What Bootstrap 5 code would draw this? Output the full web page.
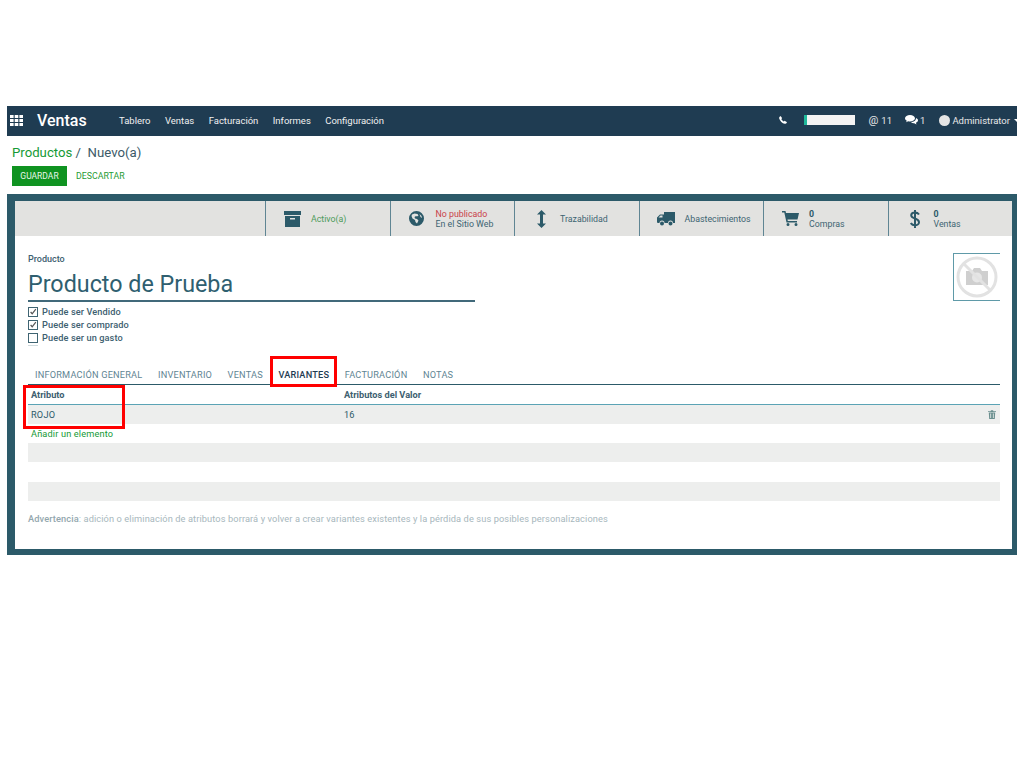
<!DOCTYPE html>
<html lang="es"><head><meta charset="utf-8"><title>Ventas</title>
<link href="https://cdn.jsdelivr.net/npm/bootstrap@5.3.0/dist/css/bootstrap.min.css" rel="stylesheet">
<style>
html,body{height:767px;overflow:hidden;background:#fff}
body{font-family:Roboto,"Liberation Sans",sans-serif;color:#2c5a69;font-size:9.5px;line-height:13px}
.stage{position:relative;width:1023px;height:767px;padding:106px 6px 0 7px;overflow:hidden}
.topbar{height:30px;background:#1f3c52;color:#f0f0f0;font-size:9.5px;white-space:nowrap;padding-bottom:2px}
.gridico{margin-left:3px}
.appname{font-size:16px;font-weight:500;margin-left:14px;width:82px;color:#fff}
.menu-links{gap:14.4px}
.sys{color:#e8e8e8}
.phone{margin-right:17px}
.progressbox{width:51px;height:10px;background:#f3f3f3;border-left:3px solid #1fb89a;margin-right:13px}
.avatar{width:11px;height:11px;border-radius:50%;background:#e4e4e4;margin-right:2px}
.caretd{border-top:3px solid #fff;border-left:3px solid transparent;border-right:3px solid transparent;margin-left:4px;margin-right:-3px}
.at{font-size:11px}
.cnt1{margin-right:13px;font-size:9.5px;margin-left:3px}
.cnt2{margin-left:2px;margin-right:14px;font-size:9.5px}
.crumbs{height:58px;padding:9px 5px 0}
.crumb-t{font-size:13.2px;line-height:16px;color:#3c5a68}
.crumb-t span{color:#159a35}
.crumb-btns{margin-top:5px}
.save{background:#0f9321;color:#e9f6ea;font-size:8.5px;height:20px;width:55px;line-height:20px;text-align:center}
.discard{color:#1f9c35;font-size:8.8px;line-height:20px;margin-left:9px}
.panel{height:361px;background:#2c5a69;padding:7px 5px 6px 8px}
.sheet{height:348px;background:#fff;position:relative}
.stats{height:35px;background:#e2e2e0;padding-left:250px}
.stat{width:124.5px;border-left:1px solid #5f8593;font-size:8.8px;line-height:10px;display:flex;align-items:center;color:#3d6472;flex:none}
.stat.last{width:124px}
.stat svg{flex:none;fill:#2c5a69}
.ico{width:52px;margin-right:-7px;display:flex;justify-content:center;flex:none}
.red{color:#c9414a}.grn{color:#4c9a5a}
.stat b{font-weight:700;color:#2c5a69}
.formarea{padding:17px 12px 0 13px;position:relative}
.lbl{font-weight:500;font-size:9px;line-height:12px;color:#3d6070}
.prodname{font-size:23.3px;line-height:28px;height:33px;margin-top:4px;padding-top:1px;width:447px;border-bottom:2px solid #41697a;color:#2f5f70}
.checks{margin-top:3px}
.chk{display:flex;align-items:center;height:13px;font-weight:500;font-size:9.2px;letter-spacing:.1px;color:#3d6070}
.box{width:10px;height:10px;border:1px solid #3f6472;margin-right:4px;flex:none;display:block}
.stub{width:10px;height:1px;background:#cfdadd;margin-top:1px}
.tabs{margin-top:12px;height:27px;border-bottom:1px solid #2c5a69;padding:7px 0 0 7px;gap:15.5px;font-size:9.2px;letter-spacing:.2px;color:#5f8593;line-height:19px;white-space:nowrap}
.tabs .on{color:#1f3c52;font-weight:500}
.thead-row{height:20px;border-bottom:1px solid #5ba3b5;font-weight:700;font-size:9.2px;line-height:19px;color:#3d6070;padding-left:3px}
.c1{width:313px;flex:none}
.trow{height:19px;background:#edeeed;line-height:20px;padding:0 4px 0 3px;font-size:9.2px;letter-spacing:.2px}
.addl{height:19px;line-height:20px;padding-left:3px;color:#159a35;font-size:9.2px;letter-spacing:.15px}
.blank{height:19px;background:#edeeed}
.gapw{height:20px}
.warn{margin-top:11px;font-size:9.25px;line-height:13px;color:#a7b7bd;letter-spacing:.1px}
.warn b{font-weight:500;color:#93a7ae}
.thumb{position:absolute;left:938px;top:52px;width:47px;height:48px;border:1px solid #5f9aa8;border-right:0;display:flex;align-items:center;justify-content:center}
.mk{position:absolute;border:3px solid #f00}
.mk1{left:270px;top:356px;width:67px;height:31px}
.mk2{left:23px;top:385px;width:102px;height:44px}
</style></head>
<body>
<div class="stage">
  <div class="topbar d-flex align-items-center">
    <svg class="gridico" width="13" height="11" viewBox="0 0 13 11" fill="#fff" aria-hidden="true"><path d="M0 0h3.600v3.100H0zM4.700 0h3.600v3.100H4.700zM9.400 0h3.600v3.100H9.400zM0 4h3.600v3.100H0zM4.700 4h3.600v3.100H4.700zM9.400 4h3.600v3.100H9.400zM0 8h3.600v3.100H0zM4.700 8h3.600v3.100H4.700zM9.400 8h3.600v3.100H9.400z"/></svg>
    <div class="appname">Ventas</div>
    <div class="d-flex menu-links"><span>Tablero</span><span>Ventas</span><span>Facturación</span><span>Informes</span><span>Configuración</span></div>
    <div class="sys d-flex align-items-center ms-auto">
      <svg class="phone" width="8" height="8" viewBox="0 0 8 8" fill="#fff" aria-hidden="true"><path d="M1.800.2 3 1.900c.1.300 0 .5-.2.7l-.5.5c.4.900 1.300 1.900 2.500 2.500l.6-.6c.2-.2.400-.2.600-.1l1.700 1.200c.2.200.2.400.1.600-.4.800-1.200 1.200-2 1C3.300 7.300.9 5 .2 2.400 0 1.500.4.700 1.200.2c.2-.1.400-.1.600 0z"/></svg>
      <div class="progressbox"></div>
      <span class="at">@</span><span class="cnt1">11</span>
      <svg width="13" height="10" viewBox="0 0 13 10" fill="#fff" aria-hidden="true"><path d="M5 0C2.300 0 0 1.400 0 3.200c0 1 .7 1.900 1.800 2.500L1.100 7.300l2.100-1c.6.100 1.200.2 1.800.2 2.700 0 5-1.500 5-3.300S7.700 0 5 0z"/><path d="M11 3.200c0 2.200-2.400 3.800-5 4 .8.800 2 1.100 3.200 1l2.300 1.300-.6-1.800C12.200 7.200 13 6.400 13 5.300c0-1-.8-1.800-2-2.300z"/></svg>
      <span class="cnt2">1</span>
      <span class="avatar"></span><span>Administrator</span><span class="caretd"></span>
    </div>
  </div>
  <div class="crumbs">
    <div class="crumb-t"><span>Productos</span> /&nbsp; Nuevo(a)</div>
    <div class="crumb-btns d-flex"><div class="save">GUARDAR</div><div class="discard">DESCARTAR</div></div>
  </div>
  <div class="panel">
    <div class="sheet">
      <div class="stats d-flex">
        <div class="stat"><span class="ico"><svg width="17" height="16" viewBox="0 0 17 16" aria-hidden="true"><path d="M0 0h17v4H0zM1 5h15v11H1zM6 7v1.500h5V7z" fill-rule="evenodd"/></svg></span><span class="grn">Activo(a)</span></div>
        <div class="stat"><span class="ico"><svg width="15" height="15" viewBox="0 0 15 15" aria-hidden="true"><path fill-rule="evenodd" d="M7.500 0a7.500 7.500 0 1 0 0 15 7.500 7.500 0 0 0 0-15zM3 3.500l2.500-1 3 .5 1 1.500L8 5.500l-1-.5-1.500 1L6 7.500l2 .5 1.500 1.500L8 12.500 6.500 11 6 9 3.500 7.500 2.500 5zM10.500 3l2 2 .5 2-1.500-1z"/></svg></span><span><span class="red">No publicado</span><br>En el Sitio Web</span></div>
        <div class="stat"><span class="ico"><svg width="9" height="18" viewBox="0 0 9 18" aria-hidden="true"><path d="M4.500 0 9 4.500H6V13.500H9L4.500 18 0 13.500H3V4.500H0z"/></svg></span><span>Trazabilidad</span></div>
        <div class="stat"><span class="ico"><svg width="18" height="14" viewBox="0 0 18 14" aria-hidden="true"><path fill-rule="evenodd" d="M7 0h11v11h-2a2.500 2.500 0 0 0-5 0H7.500a2.500 2.500 0 0 0-5 0H1a1 1 0 0 1-1-1V5.500L3 2.500H7zM1.500 5.500H5.500V3.500H3.500zM5 9.500a2 2 0 1 1 0 4 2 2 0 0 1 0-4zM13.500 9.500a2 2 0 1 1 0 4 2 2 0 0 1 0-4z"/></svg></span><span>Abastecimientos</span></div>
        <div class="stat"><span class="ico"><svg width="17" height="15" viewBox="0 0 17 15" aria-hidden="true"><path d="M0 0h3.500l.5 2h13l-1.500 6.500H5.500l.3 1.500H15v1.500H4.500L2.300 1.500H0zM6 12a1.500 1.500 0 1 1 0 3 1.500 1.500 0 0 1 0-3zM14 12a1.500 1.500 0 1 1 0 3 1.500 1.500 0 0 1 0-3z"/></svg></span><span><b>0</b><br>Compras</span></div>
        <div class="stat last"><span class="ico"><svg width="10" height="18" viewBox="0 0 10 18" aria-hidden="true"><path fill="none" stroke="#2c5a69" stroke-width="2" d="M9 4.500C8 3 6.500 2.500 5 2.500 3 2.500 1.200 3.500 1.200 5.300c0 4 7.800 2.500 7.800 7 0 1.900-2 3-4 3-1.700 0-3.300-.7-4.200-2.200M5 0v18"/></svg></span><span><b>0</b><br>Ventas</span></div>
      </div>
      <div class="formarea">
        <div class="lbl">Producto</div>
        <div class="prodname">Producto de Prueba</div>
        <div class="checks">
          <div class="chk"><svg class="box" viewBox="0 0 10 10" aria-hidden="true"><path d="M2 5l2 2.200L8.500 1.500" fill="none" stroke="#555" stroke-width="1.500"/></svg>Puede ser Vendido</div>
          <div class="chk"><svg class="box" viewBox="0 0 10 10" aria-hidden="true"><path d="M2 5l2 2.200L8.500 1.500" fill="none" stroke="#555" stroke-width="1.500"/></svg>Puede ser comprado</div>
          <div class="chk"><span class="box"></span>Puede ser un gasto</div>
          <div class="stub"></div>
        </div>
        <div class="tabs d-flex"><span>INFORMACIÓN GENERAL</span><span>INVENTARIO</span><span>VENTAS</span><span class="on">VARIANTES</span><span>FACTURACIÓN</span><span>NOTAS</span></div>
        <div class="thead-row d-flex"><div class="c1">Atributo</div><div>Atributos del Valor</div></div>
        <div class="trow d-flex align-items-center"><div class="c1">ROJO</div><div>16</div>
          <svg class="ms-auto" width="8" height="9" viewBox="0 0 8 9" fill="#6b8f8f" aria-hidden="true"><path fill-rule="evenodd" d="M0 1.200h2.500L3 .2h2l.5 1H8V2H0zM.8 2.600h6.400L6.800 9H1.200zM2.300 3.500v4.500h.8V3.500zM4.900 3.500v4.500h.8V3.500z"/></svg>
        </div>
        <div class="addl">Añadir un elemento</div>
        <div class="blank"></div><div class="gapw"></div><div class="blank"></div>
        <div class="warn"><b>Advertencia</b>: adición o eliminación de atributos borrará y volver a crear variantes existentes y la pérdida de sus posibles personalizaciones</div>
      </div>
      <div class="thumb"><svg width="42" height="42" viewBox="0 0 42 42" aria-hidden="true"><path fill="#cfcfcf" d="M10 15h6l2-3h6l2 3h6v14H10z"/><circle cx="21" cy="21.500" r="5" fill="#e6e6e6"/><circle cx="21" cy="21" r="19" fill="none" stroke="#e2e2e2" stroke-width="3"/><path d="M8 8l26 26" stroke="#e2e2e2" stroke-width="3"/></svg></div>
    </div>
  </div>
  <div class="mk mk1"></div><div class="mk mk2"></div>
</div>
<script src="https://cdn.jsdelivr.net/npm/bootstrap@5.3.0/dist/js/bootstrap.bundle.min.js"></script>
</body></html>
